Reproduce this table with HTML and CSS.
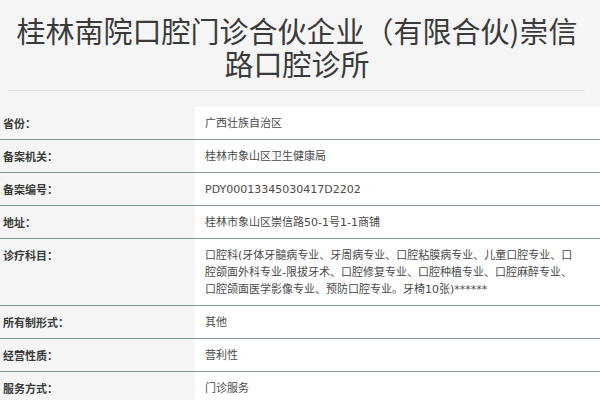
FILE: index.html
```html
<!DOCTYPE html>
<html lang="zh-CN">
<head>
<meta charset="utf-8">
<title>桂林南院口腔门诊合伙企业（有限合伙)崇信路口腔诊所</title>
<link rel="stylesheet" href="styles.css">
</head>
<body>
<div class="page">
  <h1 class="title">桂林南院口腔门诊合伙企业（有限合伙)崇信<br>路口腔诊所</h1>
  <div class="divider"></div>
  <table class="info">
    <tr><th>省份：</th><td>广西壮族自治区</td></tr>
    <tr><th>备案机关：</th><td>桂林市象山区卫生健康局</td></tr>
    <tr><th>备案编号：</th><td>PDY00013345030417D2202</td></tr>
    <tr><th>地址：</th><td>桂林市象山区崇信路50-1号1-1商铺</td></tr>
    <tr><th>诊疗科目：</th><td>口腔科(牙体牙髓病专业、牙周病专业、口腔粘膜病专业、儿童口腔专业、口腔颌面外科专业-限拔牙术、口腔修复专业、口腔种植专业、口腔麻醉专业、口腔颌面医学影像专业、预防口腔专业。牙椅10张)******</td></tr>
    <tr><th>所有制形式：</th><td>其他</td></tr>
    <tr><th>经营性质：</th><td>营利性</td></tr>
    <tr><th>服务方式：</th><td>门诊服务</td></tr>
  </table>
</div>
</body>
</html>
```

FILE: styles.css
```css
html, body {
  margin: 0;
  padding: 0;
  background: #f5f5f5;
}

.page {
  font-family: "DejaVu Sans", "Noto Sans CJK SC", sans-serif;
  color: #444;
}

.title {
  margin: 0;
  padding: 14px 8px 0 2px;
  font-family: "Noto Sans CJK SC", sans-serif;
  font-size: 29px;
  line-height: 33px;
  font-weight: 400;
  color: #3a3a3a;
  text-align: center;
}

.divider {
  margin: 10px 15px 0 8px;
  height: 1px;
  background: #e4e4e4;
}

.info {
  margin-top: 16px;
  width: 100%;
  border-collapse: collapse;
  font-size: 11px;
  line-height: 17px;
}

.info tr {
  border-bottom: 1px solid #7b998f;
}

.info th {
  width: 189px;
  padding: 8px 3px 7px 3px;
  text-align: left;
  vertical-align: top;
  font-family: "Noto Sans CJK SC", sans-serif;
  font-weight: 700;
  color: #3a3a3a;
  background: #f5f5f5;
}

.info td {
  padding: 8px 20px 7px 10px;
  vertical-align: top;
  background: #fff;
  color: #4a4a4a;
}
```
